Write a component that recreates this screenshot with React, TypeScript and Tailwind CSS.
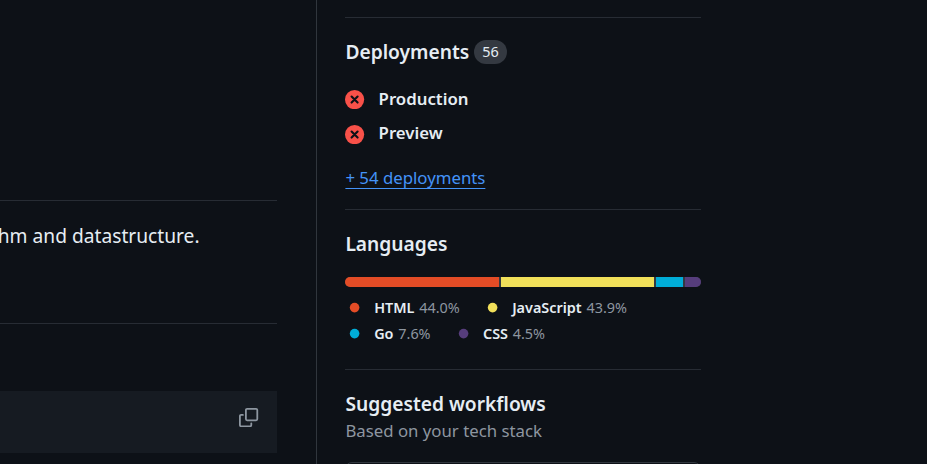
import React from "react";

const Failed = () => (
  <svg viewBox="0 0 16 16" className="size-[19.2px] shrink-0">
    <circle cx="8" cy="8" r="8" className="fill-[#f85149]" />
    <path d="m5.5 5.5 5 5m0-5-5 5" className="fill-none stroke-[#0d1117] stroke-[1.8]" strokeLinecap="round" />
  </svg>
);

const CopyIcon = () => (
  <svg viewBox="0 0 16 16" className="size-[19.2px] fill-[#8d96a0]">
    <path d="M0 6.75C0 5.784.784 5 1.75 5h1.5a.75.75 0 0 1 0 1.5h-1.5a.25.25 0 0 0-.25.25v7.5c0 .138.112.25.25.25h7.5a.25.25 0 0 0 .25-.25v-1.5a.75.75 0 0 1 1.5 0v1.5A1.75 1.75 0 0 1 9.25 16h-7.5A1.75 1.75 0 0 1 0 14.25Z" />
    <path d="M5 1.75C5 .784 5.784 0 6.75 0h7.5C15.216 0 16 .784 16 1.75v7.5A1.75 1.75 0 0 1 14.25 11h-7.5A1.75 1.75 0 0 1 5 9.25Zm1.75-.25a.25.25 0 0 0-.25.25v7.5c0 .138.112.25.25.25h7.5a.25.25 0 0 0 .25-.25v-7.5a.25.25 0 0 0-.25-.25Z" />
  </svg>
);

const Language = ({ dot, name, share }: { dot: string; name: string; share: string }) => (
  <li className="flex items-center whitespace-nowrap">
    <svg viewBox="0 0 16 16" className={`mr-[9.6px] size-[19.2px] ${dot}`}>
      <path d="M8 4a4 4 0 1 1 0 8 4 4 0 0 1 0-8Z" />
    </svg>
    <span className="mr-[4.8px] font-semibold">{name}</span>
    <span className="text-[#8d96a0]">{share}</span>
  </li>
);

const Deployment = ({ name, iconPad }: { name: string; iconPad: string }) => (
  <li className="flex h-[34px] items-start gap-[14px]">
    <div className={iconPad}>
      <Failed />
    </div>
    <span className="pt-1 text-[16.8px] leading-[25px] font-semibold">{name}</span>
  </li>
);

const heading = "text-[19.2px] leading-6 font-semibold";

export default function App() {
  return (
    <div className="flex h-[464px] w-full overflow-hidden bg-[#0d1117] font-['Noto_Sans',sans-serif] text-[#e6edf3]">
      <main className="w-[277px] shrink-0 pt-[200px]">
        <div className="h-[124px] border-y border-[#272c34] pt-5">
          <p className="flex w-[199.6px] justify-end text-[19.2px] leading-[29px] whitespace-nowrap">
            hm and datastructure.
          </p>
        </div>
        <div className="mt-[67px] flex h-[62px] justify-end bg-[#161b22] pt-[17px] pr-[18.5px]">
          <CopyIcon />
        </div>
      </main>

      <aside className="ml-[39px] w-[385.4px] shrink-0 border-l border-[#30363d] pl-[28.4px]">
        <div className="h-[17px]" />
        <section className="h-48 border-t border-[#272c34] pt-[22px]">
          <div className="flex items-center gap-[5px]">
            <h2 className={heading}>Deployments</h2>
            <span className="flex h-6 items-center rounded-full bg-[#343941] px-2 text-[14.4px] leading-none">56</span>
          </div>
          <ul className="mt-[18px]">
            <Deployment name="Production" iconPad="pt-2" />
            <Deployment name="Preview" iconPad="pt-[9px]" />
          </ul>
          <a className="mt-[15px] inline-block text-[16.8px] leading-[25px] text-[#4493f8] underline underline-offset-[3.84px]">
            + 54 deployments
          </a>
        </section>

        <section className="h-40 border-t border-[#272c34] pt-[22px]">
          <h2 className={heading}>Languages</h2>
          <div className="mt-[21px] flex h-2.5 gap-[2px] overflow-hidden rounded-[6px] bg-[#343941]">
            <span className="w-[154px] bg-[#e34c26]" />
            <span className="w-[153px] bg-[#f1e05a]" />
            <span className="w-[27px] bg-[#00add8]" />
            <span className="flex-1 bg-[#563d7c]" />
          </div>
          <ul className="mt-2 flex flex-wrap gap-x-[23.6px] text-[14.4px] leading-[26px]">
            <Language dot="fill-[#e34c26]" name="HTML" share="44.0%" />
            <Language dot="fill-[#f1e05a]" name="JavaScript" share="43.9%" />
            <Language dot="fill-[#00add8]" name="Go" share="7.6%" />
            <Language dot="fill-[#563d7c]" name="CSS" share="4.5%" />
          </ul>
        </section>

        <section className="border-t border-[#272c34] pt-[22px]">
          <h2 className={heading}>Suggested workflows</h2>
          <p className="mt-0.5 text-[16.8px] leading-[25px] text-[#8d96a0]">Based on your tech stack</p>
          <div className="mt-[19px] h-20 rounded-[7px] border border-[#30363d]" />
        </section>
      </aside>
    </div>
  );
}
